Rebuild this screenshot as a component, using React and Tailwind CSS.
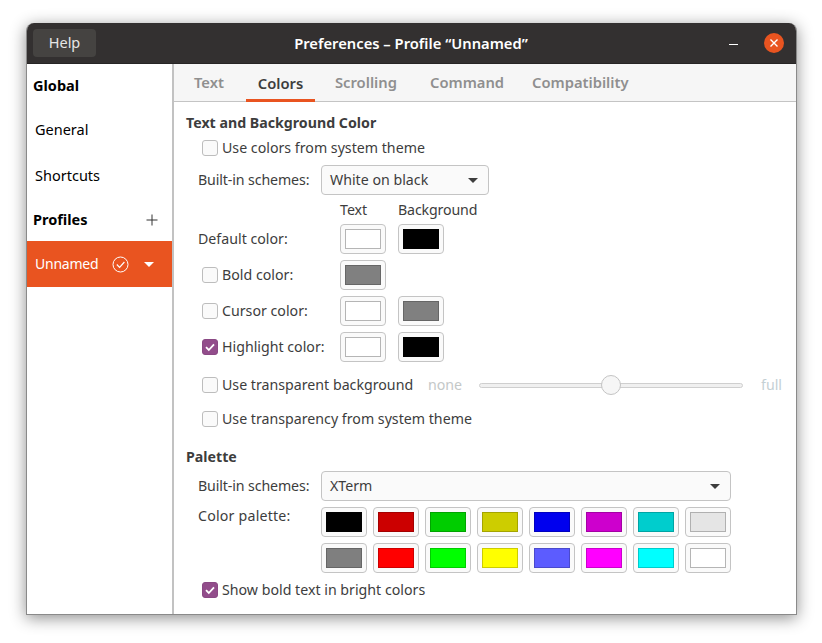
import React from "react";

const F = "[font-family:'Noto_Sans',sans-serif]";

function Check({ on, label }) {
  return (
    <div className="flex items-center">
      {on ? (
        <span className="w-4 h-4 rounded-[3px] bg-[#924d8b] border border-[#8a4984] flex items-center justify-center">
          <svg width="12" height="12" viewBox="0 0 12 12" fill="none"><path d="M2 6.2 L4.8 9 L10 3.4" stroke="#fff" strokeWidth="1.8" /></svg>
        </span>
      ) : (
        <span className="w-4 h-4 rounded-[3px] bg-[#fafafa] border border-[#bdbdbd]" />
      )}
      <span className="ml-1 text-[#3d3d3d]">{label}</span>
    </div>
  );
}

function Swatch({ color, border, className = "" }) {
  return (
    <div className={"w-[46px] h-[30px] shrink-0 rounded-[4px] border border-[#c4c4c4] bg-[#fafafa] flex items-center justify-center " + className}>
      <div className="w-[36px] h-[20px] border" style={{ backgroundColor: color, borderColor: border }} />
    </div>
  );
}

function Arrow({ color = "#3d3d3d" }) {
  return (
    <svg width="10" height="5" viewBox="0 0 10 5"><path d="M0 0 H10 L5 5 Z" fill={color} /></svg>
  );
}

function Select({ label, className }) {
  return (
    <div className={"h-[30px] rounded-[4px] border border-[#c4c4c4] bg-[#fafafa] flex items-center justify-between pl-2 pr-[10px] text-[#3d3d3d] " + className}>
      <span>{label}</span>
      <Arrow />
    </div>
  );
}

function ColorRow({ check, on, label, a, b }) {
  return (
    <div className="h-[36px] flex items-center">
      <div className="w-[154px] pl-[16px]">
        {check ? <Check on={on} label={label} /> : <span className="-ml-[4px] block text-[#3d3d3d]">{label}</span>}
      </div>
      <Swatch color={a[0]} border={a[1]} />
      {b && <Swatch color={b[0]} border={b[1]} className="ml-[12px]" />}
    </div>
  );
}

const WHITE = ["#ffffff", "#b5b5b5"];
const BLACK = ["#000000", "#000000"];
const GRAY = ["#808080", "#666666"];

const P1 = [
  ["#000000", "#000000"], ["#cc0000", "#a30000"], ["#00cd00", "#00a400"], ["#cdcd00", "#a4a400"],
  ["#0000ee", "#0000be"], ["#cd00cd", "#a400a4"], ["#00cdcd", "#00a4a4"], ["#e5e5e5", "#b0b0b0"],
];
const P2 = [
  ["#7f7f7f", "#666666"], ["#ff0000", "#cc0000"], ["#00ff00", "#00cc00"], ["#ffff00", "#cccc00"],
  ["#5c5cff", "#4a4acc"], ["#ff00ff", "#cc00cc"], ["#00ffff", "#00cccc"], ["#ffffff", "#b5b5b5"],
];

export default function App() {
  return (
    <div className={"w-[822px] h-[643px] bg-white overflow-hidden pt-[23px] pl-[26px] text-[14.5px] " + F}>
      <div className="w-[771px] h-[592px] rounded-t-[8px] bg-white border-x border-b border-[#8a8a8a] shadow-[0_3px_16px_rgba(0,0,0,0.45)] flex flex-col overflow-hidden">
        <div className="h-[41px] shrink-0 bg-[#333030] border-b border-[#272525] flex items-center pl-[6px] pr-[12px]">
          <div className="w-[63px] h-[28px] rounded-[4px] bg-[#454341] text-[#e6e6e6] flex items-center justify-center">Help</div>
          <div className="flex-1 text-center text-white font-semibold -ml-[3px] text-[14.75px]">Preferences – Profile “Unnamed”</div>
          <div className="w-[9px] h-[1.5px] bg-white mr-[26px] mt-[3px]" />
          <div className="w-[20px] h-[20px] rounded-full bg-[#e95420] flex items-center justify-center">
            <svg width="10" height="10" viewBox="0 0 10 10"><path d="M1.5 1.5 L8.5 8.5 M8.5 1.5 L1.5 8.5" stroke="#fff" strokeWidth="1.4" /></svg>
          </div>
        </div>
        <div className="flex flex-1 min-h-0">
          <div className="w-[145px] shrink-0 text-black">
            <div className="h-[43px] flex items-center pl-[6px] font-bold">Global</div>
            <div className="h-[46px] flex items-center pl-[8px]">General</div>
            <div className="h-[46px] flex items-center pl-[8px]">Shortcuts</div>
            <div className="h-[42px] flex items-center justify-between pl-[6px] pr-[14px] font-bold">
              <span>Profiles</span>
              <svg width="12" height="12" viewBox="0 0 12 12"><path d="M6 0.5 V11.5 M0.5 6 H11.5" stroke="#333" strokeWidth="1" /></svg>
            </div>
            <div className="h-[46px] bg-[#e95420] text-white flex items-center pl-[8px]">
              <span className="w-[77px] text-[14px] tracking-[-0.25px] pb-[1px]">Unnamed</span>
              <svg width="17" height="17" viewBox="0 0 17 17" fill="none">
                <circle cx="8.5" cy="8.5" r="7.5" stroke="#fff" strokeWidth="1" />
                <path d="M4.8 8.5 L7.6 11.3 L12.4 6" stroke="#fff" strokeWidth="1.2" />
              </svg>
              <span className="ml-[15px]"><Arrow color="#fff" /></span>
            </div>
          </div>
          <div className="w-[2px] bg-[#c2c2c2] shrink-0" />
          <div className="flex-1 min-w-0 flex flex-col">
            <div className="h-[38px] shrink-0 bg-[#f6f6f6] border-b border-[#c4c4c4] flex pl-[8px] font-semibold text-[#8f8f8f] text-[14.75px]">
              <div className="w-[52px] pl-[12px] flex items-center h-[37px]">Text</div>
              <div className="w-[69px] ml-[12px] flex items-center justify-center h-[38px] text-[#3d3d3d] border-b-[3px] border-[#e95420] pt-[3px]">Colors</div>
              <div className="ml-[20px] w-[95px] flex items-center h-[37px]">Scrolling</div>
              <div className="w-[102px] flex items-center h-[37px]">Command</div>
              <div className="flex items-center h-[37px]">Compatibility</div>
            </div>
            <div className="flex-1 pl-[12px] pt-[11px] text-[#3d3d3d] text-[14.2px]">
              <div className="h-[20px] flex items-center font-bold">Text and Background Color</div>
              <div className="h-[30px] flex items-center pl-[16px]"><Check label="Use colors from system theme" /></div>
              <div className="h-[34px] flex items-center pl-[12px]">
                <span className="w-[123px] tracking-[-0.12px]">Built-in schemes:</span>
                <Select label="White on black" className="w-[168px]" />
              </div>
              <div className="h-[24px] flex items-center pl-[154px] pt-[2px]">
                <span className="w-[58px]">Text</span>
                <span className="tracking-[-0.15px]">Background</span>
              </div>
              <ColorRow label="Default color:" a={WHITE} b={BLACK} />
              <ColorRow check label="Bold color:" a={GRAY} />
              <ColorRow check label="Cursor color:" a={WHITE} b={GRAY} />
              <ColorRow check on label="Highlight color:" a={WHITE} b={BLACK} />
              <div className="h-[38px] mt-[1px] flex items-center pl-[16px]">
                <div className="w-[226px]"><Check label="Use transparent background" /></div>
                <span className="text-[#c4c8c8] w-[51px]">none</span>
                <div className="w-[264px] h-[5px] rounded-full bg-[#f0f0f0] border border-[#cfcfcf] relative">
                  <div className="absolute left-[121px] -top-[9px] w-[20px] h-[20px] rounded-full bg-[#f6f6f6] border border-[#c4c4c4]" />
                </div>
                <span className="ml-[18px] text-[#c4d0d4]">full</span>
              </div>
              <div className="h-[30px] flex items-center pl-[16px]"><Check label="Use transparency from system theme" /></div>
              <div className="h-[45px] flex items-center font-bold">Palette</div>
              <div className="h-[30px] flex items-center pl-[12px] -mt-[8px]">
                <span className="w-[123px] tracking-[-0.12px]">Built-in schemes:</span>
                <Select label="XTerm" className="w-[410px]" />
              </div>
              <div className="mt-[6px] flex pl-[12px]">
                <span className="w-[123px] leading-[18px] tracking-[0.2px]">Color palette:</span>
                <div className="flex flex-col gap-[6px]">
                  <div className="flex gap-[6px]">{P1.map((c, i) => <Swatch key={i} color={c[0]} border={c[1]} />)}</div>
                  <div className="flex gap-[6px]">{P2.map((c, i) => <Swatch key={i} color={c[0]} border={c[1]} />)}</div>
                </div>
              </div>
              <div className="h-[34px] flex items-center pl-[16px]"><Check on label="Show bold text in bright colors" /></div>
            </div>
          </div>
        </div>
      </div>
    </div>
  );
}
